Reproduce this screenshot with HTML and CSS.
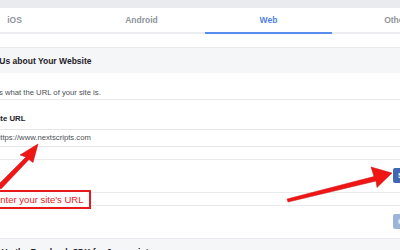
FILE: index.html
```html
<!DOCTYPE html>
<html lang="en">
<head>
  <meta charset="UTF-8" />
  <title>Quick Start for Web</title>
  <link rel="stylesheet" href="styles.css">
</head>
<body>
  <div class="topbar"></div>
  <nav class="tabs">
    <div class="tab">iOS</div>
    <div class="tab">Android</div>
    <div class="tab active">Web</div>
    <div class="tab">Other</div>
  </nav>
  <div class="gap"></div>

  <div class="page">
    <div class="section-head">Tell Us about Your Website</div>
    <div class="desc">Tell us what the URL of your site is.</div>
    <div class="label">Site URL</div>
    <div class="url-input">https://www.nextscripts.com</div>
    <div class="spacer"></div>
    <div class="btn-row">
      <button class="btn">Save</button>
    </div>
    <div class="spacer"></div>
    <div class="btn-row">
      <button class="btn disabled">Continue</button>
    </div>
    <div class="section-head footer">Set Up the Facebook SDK for Javascript</div>
  </div>

  <div class="callout">Enter your site's URL</div>

  <svg class="arrows" width="400" height="250" viewBox="0 0 400 250">
    <polygon points="38,144 20,155 26,157 -3,186 1,189 29,159.5 33,162.5" />
    <polygon points="392,173 371,167 374,176.5 287,199 288,202 376,181 377,187.5" />
  </svg>
</body>
</html>
```

FILE: styles.css
```css
* {
  box-sizing: border-box;
}

body {
  margin: 0;
  width: 400px;
  height: 250px;
  overflow: hidden;
  position: relative;
  background: #fff;
  font-family: 'Liberation Sans', Arial, sans-serif;
  color: #1d2129;
}

.topbar {
  height: 8px;
  background: #e9ebee;
}

.tabs {
  display: flex;
  margin-left: -49px;
  height: 26px;
  border-bottom: 2px solid #ebedf0;
}

.tab {
  flex: 0 0 127px;
  text-align: center;
  line-height: 24px;
  font-size: 8.5px;
  font-weight: bold;
  color: #90949c;
}

.tab.active {
  color: #4f7fea;
  border-bottom: 2px solid #5a8cf0;
  margin-bottom: -2px;
}

.gap {
  height: 13px;
}

.page {
  margin-left: -20px;
  width: 520px;
}

.section-head {
  height: 26px;
  line-height: 26px;
  padding-left: 3px;
  background: #f5f6f7;
  border-top: 1px solid #e9eaed;
  font-size: 8.5px;
  font-weight: bold;
  color: #1d2129;
}

.desc {
  height: 27px;
  padding-top: 14px;
  padding-left: 1px;
  line-height: 12px;
  font-size: 7.7px;
  color: #4b4f56;
  border-bottom: 1px solid #e9eaed;
}

.label {
  height: 29px;
  padding-top: 13px;
  padding-left: 13px;
  line-height: 12px;
  font-size: 7.8px;
  font-weight: bold;
}

.url-input {
  height: 18px;
  line-height: 16px;
  padding-left: 16px;
  font-size: 7.7px;
  color: #4b4f56;
  border-top: 1px solid #e4e6ea;
  border-bottom: 1px solid #e4e6ea;
}

.spacer {
  height: 13px;
  border-bottom: 1px solid #e9eaed;
}

.btn-row {
  height: 33px;
  padding-top: 8px;
  padding-left: 413px;
  border-bottom: 1px solid #e9eaed;
}

.btn {
  display: block;
  height: 15px;
  padding: 0 5px;
  border: none;
  border-radius: 2px;
  background: #4267b2;
  color: #fff;
  font-family: inherit;
  font-size: 7.5px;
  font-weight: bold;
}

.btn.disabled {
  background: #9cb4d8;
}

.footer {
  padding-left: 6px;
  border-top: none;
}

.callout {
  position: absolute;
  left: -10px;
  top: 190px;
  width: 101px;
  height: 19px;
  padding-left: 2px;
  border: 2px solid #e8191c;
  background: #fff;
  color: #e8191c;
  font-size: 9.5px;
  line-height: 15px;
  white-space: nowrap;
}

.arrows {
  position: absolute;
  left: 0;
  top: 0;
  pointer-events: none;
}

.arrows polygon {
  fill: #f01616;
  stroke: #c40f0f;
  stroke-width: 0.5;
}
```
